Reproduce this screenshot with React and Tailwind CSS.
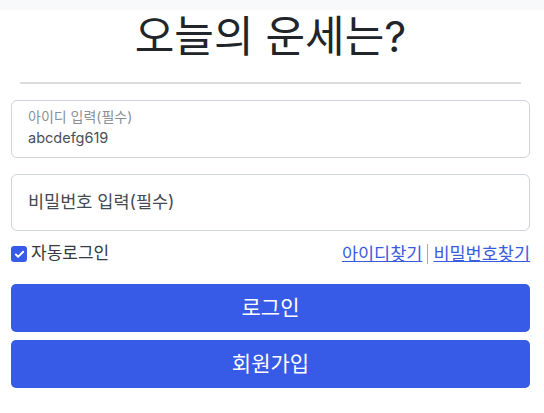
import { Check } from "lucide-react";

function App() {
  return (
    <div
      className="min-h-[413px] bg-white text-[#212529]"
      style={{ fontFamily: 'Inter, "Noto Sans CJK KR", sans-serif' }}
    >
      <div className="h-[10px] bg-[#f8f9fa]" />
      <div className="w-[519px] ml-[11px]">
        <h1 className="text-center text-[43px] leading-[48px] mt-[2px] font-normal text-[#212529]">
          오늘의 운세는?
        </h1>
        <div className="mx-[9px] mt-[22px] h-[2px] bg-[#dcdcdc]" />

        <div className="mt-[16px] h-[58px] rounded-[6px] border border-[#ced4da] px-[16px] pt-[6px]">
          <p className="text-[14px] leading-[20px] text-[#8a8f95]">아이디 입력(필수)</p>
          <p className="text-[14.5px] leading-[22px] text-[#495057]">abcdefg619</p>
        </div>

        <div className="mt-[16px] h-[57px] rounded-[6px] border border-[#ced4da] px-[16px] flex items-center">
          <p className="text-[17.5px] text-[#444a50]">비밀번호 입력(필수)</p>
        </div>

        <div className="mt-[13px] flex items-center justify-between h-[20px]">
          <label className="flex items-center gap-[4px] text-[17px] text-[#343a40]">
            <span className="w-[16px] h-[16px] rounded-[3px] bg-[#375be6] flex items-center justify-center">
              <Check className="w-[11px] h-[11px] text-white" strokeWidth={4} />
            </span>
            자동로그인
          </label>
          <div className="flex items-center gap-[5px] text-[17.5px] text-[#3a5be0]">
            <a className="underline">아이디찾기</a>
            <span className="w-[1px] h-[20px] bg-[#b0a898]" />
            <a className="underline">비밀번호찾기</a>
          </div>
        </div>

        <button className="mt-[20px] w-full h-[48px] rounded-[5px] bg-[#375be6] text-white text-[21px]">
          로그인
        </button>
        <button className="mt-[8px] w-full h-[48px] rounded-[5px] bg-[#375be6] text-white text-[21px]">
          회원가입
        </button>
      </div>
    </div>
  );
}

export default App;
